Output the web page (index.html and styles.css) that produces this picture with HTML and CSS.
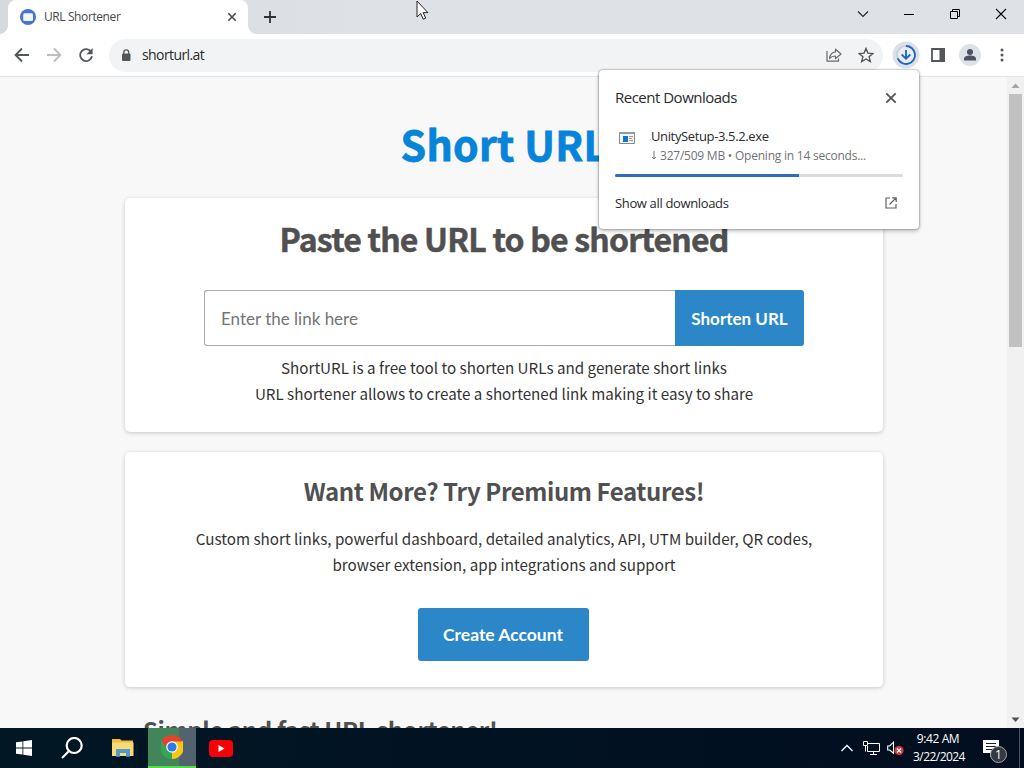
FILE: index.html
```
<!doctype html>
<html lang="en">
    <head>
        <meta charset="UTF-8" />
        <meta name="viewport" content="width=device-width, initial-scale=1.0" />
        <title>URL Shortener</title>
        <link rel="stylesheet" href="styles.css">
    </head>
    <body>
        <div class="browser">
            <!-- Tab strip and window controls -->
            <header class="tab-strip">
                <div class="tab">
                    <svg class="favicon" width="16" height="16" viewBox="0 0 16 16">
                        <circle cx="8" cy="8" r="8" fill="#4b74cb" />
                        <rect x="3.2" y="4.2" width="9.8" height="7.8" rx="1.5" fill="#eef7fb" />
                    </svg>
                    <span class="tab-title">URL Shortener</span>
                    <svg class="tab-close" width="10" height="10" viewBox="0 0 10 10">
                        <path d="M1.3 1.3l7.4 7.4M8.7 1.3L1.3 8.7" stroke="#45484b" stroke-width="1.5" />
                    </svg>
                </div>
                <svg class="new-tab" width="12" height="12" viewBox="0 0 12 12">
                    <path d="M6 0v12M0 6h12" stroke="#2f3236" stroke-width="1.8" />
                </svg>
                <div class="window-controls">
                    <svg width="46" height="28" viewBox="0 0 46 28"><path d="M18 11.5l5 5 5-5" fill="none" stroke="#222" stroke-width="1.1" /></svg>
                    <svg width="46" height="28" viewBox="0 0 46 28"><path d="M18 14.5h10" stroke="#000" /></svg>
                    <svg width="46" height="28" viewBox="0 0 46 28"><path d="M18.5 11.5h7v7h-7zM20.500 11.500v-2h7v7h-2" fill="none" stroke="#000" /></svg>
                    <svg width="46" height="28" viewBox="0 0 46 28"><path d="M18 9l10 10M28 9L18 19" stroke="#000" stroke-width="1.1" /></svg>
                </div>
            </header>

            <!-- Address bar -->
            <div class="toolbar">
                <div class="nav">
                    <svg width="16" height="16" viewBox="0 0 16 16"><path d="M15 8H2M8 1.500L1.600 8 8 14.500" fill="none" stroke="#54575a" stroke-width="1.9" /></svg>
                    <svg width="16" height="16" viewBox="0 0 16 16"><path d="M1 8h13M8 1.500L14.400 8 8 14.500" fill="none" stroke="#bbbdbf" stroke-width="1.9" /></svg>
                    <svg width="16" height="16" viewBox="0 0 16 16"><path d="M13.200 4.900A6 6 0 1 0 14 9.300" fill="none" stroke="#54575a" stroke-width="1.9" /><path d="M14.600 1v6.200H8.400z" fill="#54575a" /></svg>
                </div>
                <div class="omnibox">
                    <svg width="10" height="13" viewBox="0 0 10 13"><rect x="1" y="4.500" width="8.500" height="7.500" rx="1" fill="#54575a" /><path d="M2.800 5V3.400a2.400 2.400 0 0 1 4.900 0V5" fill="none" stroke="#54575a" stroke-width="1.300" /></svg>
                    <span class="address">shorturl.at</span>
                    <svg class="share" width="16" height="16" viewBox="0 0 16 16" fill="none" stroke="#686b6f" stroke-width="1.200"><path d="M1 4v10.200h11.500V11.500" /><path d="M9.500 2.200L15 7l-5.500 4.600V9C7 9 5.200 9.500 3.600 11.500 4 7.500 6.200 5.300 9.500 4.900z" stroke-linejoin="round" /></svg>
                    <svg class="star" width="16" height="16" viewBox="0 0 16 16"><path d="M8 1.500l1.900 4.600 5 .4-3.800 3.300 1.200 4.800L8 12l-4.300 2.600 1.200-4.800L1.100 6.500l5-.4z" fill="none" stroke="#54575a" stroke-width="1.400" /></svg>
                </div>
                <div class="actions">
                    <svg width="28" height="28" viewBox="0 0 28 28">
                        <circle cx="14" cy="14" r="13.500" fill="#dce1e8" />
                        <circle cx="14" cy="14" r="9" fill="#e9edf3" stroke="#c5ced9" stroke-width="1.700" />
                        <path d="M14 5a9 9 0 1 1-8.300 12.400" fill="none" stroke="#1b63c5" stroke-width="1.800" />
                        <path d="M14 9v8.500M9.700 13.500L14 17.800l4.300-4.300" fill="none" stroke="#1b63c5" stroke-width="1.800" />
                    </svg>
                    <svg width="14" height="14" viewBox="0 0 14 14"><path d="M1 1h12v12H1z" fill="none" stroke="#54575a" stroke-width="1.800" /><path d="M8.500 0H14v14H8.500z" fill="#54575a" /></svg>
                    <svg width="22" height="22" viewBox="0 0 22 22"><circle cx="11" cy="11" r="11" fill="#dee1e6" /><circle cx="11" cy="8" r="3" fill="#4c5260" /><path d="M5 16.500v-1.700c0-2 3-3.200 6-3.200s6 1.200 6 3.200v1.700z" fill="#4c5260" /></svg>
                    <svg width="4" height="14" viewBox="0 0 4 14" fill="#54575a"><circle cx="2" cy="2" r="1.500" /><circle cx="2" cy="7" r="1.500" /><circle cx="2" cy="12" r="1.500" /></svg>
                </div>
            </div>

            <!-- Page -->
            <div class="viewport">
                <main class="page">
                    <h1 class="logo">Short URL</h1>
                    <section class="card card-shorten">
                        <h2>Paste the URL to be shortened</h2>
                        <form class="shorten-form">
                            <input class="link-input" type="text" placeholder="Enter the link here">
                            <button class="button" type="button">Shorten URL</button>
                        </form>
                        <p>ShortURL is a free tool to shorten URLs and generate short links<br>URL shortener allows to create a shortened link making it easy to share</p>
                    </section>
                    <section class="card card-premium">
                        <h3>Want More? Try Premium Features!</h3>
                        <p>Custom short links, powerful dashboard, detailed analytics, API, UTM builder, QR codes,<br>browser extension, app integrations and support</p>
                        <button class="button button-account" type="button">Create Account</button>
                    </section>
                    <h3 class="next-heading">Simple and fast URL shortener!</h3>
                </main>
                <div class="scrollbar">
                    <svg width="17" height="17" viewBox="0 0 17 17"><path d="M4.500 11l4-4.500 4 4.500z" fill="#a3a3a3" /></svg>
                    <div class="thumb"></div>
                    <svg class="scroll-down" width="17" height="17" viewBox="0 0 17 17"><path d="M4.500 6.500l4 4.500 4-4.500z" fill="#505050" /></svg>
                </div>
            </div>
        </div>

        <!-- Download bubble -->
        <aside class="downloads">
            <div class="downloads-head">
                <span class="downloads-title">Recent Downloads</span>
                <svg width="12" height="12" viewBox="0 0 12 12"><path d="M1.300 1.300l9.400 9.400M10.700 1.300l-9.400 9.400" stroke="#505357" stroke-width="1.800" /></svg>
            </div>
            <div class="download">
                <svg width="16" height="12" viewBox="0 0 16 12">
                    <path d="M.5.5h15v11H.5z" fill="#f5f5f5" stroke="#85898c" />
                    <path d="M0 0h16v2H0z" fill="#969a9d" />
                    <path d="M4 4h5v6H4z" fill="#0878cf" />
                    <path d="M10 4.500h4M10 6.500h3M10 8.500h4" stroke="#999" />
                </svg>
                <div class="download-text">
                    <div class="file-name">UnitySetup-3.5.2.exe</div>
                    <div class="file-status"><svg width="6" height="9" viewBox="0 0 6 9"><path d="M3 0v8M1 6l2 2 2-2" fill="none" stroke="#777" /></svg><span>327/509 MB • Opening in 14 seconds...</span></div>
                </div>
            </div>
            <div class="progress"><div class="progress-bar"></div></div>
            <div class="downloads-foot">
                <span>Show all downloads</span>
                <svg width="12" height="12" viewBox="0 0 12 12" fill="none" stroke="#606367" stroke-width="1.200"><path d="M5 1H1v10h10V7M7 .8h4.200V5M11 1L4.500 7.500" /></svg>
            </div>
        </aside>

        <!-- Windows taskbar -->
        <footer class="taskbar">
            <div class="task"><svg width="16" height="16" viewBox="0 0 16 16" fill="#fff"><path d="M0 2.300L6.500 1.400v6.200H0zM7.300 1.300L16 0v7.600H7.300zM0 8.400h6.500v6.200L0 13.700zM7.300 8.400H16V16l-8.700-1.300z" /></svg></div>
            <div class="task"><svg width="22" height="22" viewBox="0 0 22 22" fill="none" stroke="#fff" stroke-width="2.200"><circle cx="13.200" cy="8.500" r="7.500" /><path d="M8 14L1 21" /></svg></div>
            <div class="task">
                <svg width="22" height="18" viewBox="0 0 22 18">
                    <path d="M0 0h8l1.500 1.500H21V17H0z" fill="#f0bd42" /><path d="M0 3.500h21.500V17H0z" fill="#f9d978" />
                    <path d="M4 17.800V10h14v7.800h-4V14H8v3.800z" fill="#509bc7" />
                </svg>
            </div>
            <div class="task task-active">
                <svg width="22" height="24" viewBox="1 0 22 24">
                    <path d="M12 12L1.610 6A12 12 0 0 1 22.390 6z" fill="#e8412f" />
                    <path d="M12 12L12 24A12 12 0 0 1 1.610 6z" fill="#35a553" />
                    <path d="M12 12L22.390 6A12 12 0 0 1 12 24z" fill="#fbc618" />
                    <path d="M12 6.500h10.600L24 12H12z" fill="#fbc618" /><path d="M1.600 6l5.700 8.500L12 12V6.500z" fill="#e8412f" /><path d="M1.600 6L7 15l5 2.500-3 6.100A12 12 0 0 1 1.600 6z" fill="#35a553" />
                    <circle cx="12" cy="12" r="5.800" fill="#fff" /><circle cx="12" cy="12" r="4.600" fill="#287de8" />
                </svg>
            </div>
            <div class="task task-youtube"><svg width="24" height="17" viewBox="0 0 24 17"><rect width="24" height="17" rx="4" fill="#f80008" /><path d="M9.500 5l6 3.500-6 3.500z" fill="#fff" /></svg></div>
            <div class="tray">
                <svg class="tray-up" width="12" height="8" viewBox="0 0 12 8"><path d="M.5 7L6 1.500 11.500 7" fill="none" stroke="#fff" stroke-width="1.300" /></svg>
                <svg class="tray-net" width="17" height="14" viewBox="0 0 17 14" fill="none" stroke="#fff"><path d="M4 2.500h12.500v8H4.500V5M10.500 10.500v2.500M7 13.500h7M.5.500h4v4h-4zM2.500 4.500v6" /></svg>
                <svg class="tray-sound" width="18" height="15" viewBox="0 0 18 15">
                    <path d="M.7 5h2L6.500 1.200v11L2.700 9h-2z" fill="none" stroke="#fff" stroke-width="1.100" />
                    <circle cx="12" cy="9.500" r="4.600" fill="#d83b3b" /><path d="M10 7.500l4 4M14 7.500l-4 4" stroke="#fff" stroke-width="1.200" />
                </svg>
                <div class="clock"><div class="time">9:42 AM</div><div class="date">3/22/2024</div></div>
                <div class="notifications">
                    <svg width="16" height="17" viewBox="0 0 16 17"><path d="M0 0h16v13h-5l-4 4v-4H0z" fill="#fff" /><path d="M3 3.500h10M3 6.500h10M3 9.500h7" stroke="#18202c" stroke-width="1.200" /></svg>
                    <span class="badge">1</span>
                </div>
                <div class="show-desktop"></div>
            </div>
        </footer>

        <svg class="cursor" width="13" height="20" viewBox="0 0 13 20"><path d="M1 1v16l3.700-3.500 2.500 5.700 2.500-1-2.500-5.600h4.700z" fill="#fff" stroke="#222" /></svg>
    </body>
</html>
```
FILE: styles.css
```
:root {
    --blue: #2b87c8;
    --logo: #0584da;
    --gray-700: #505050;
    --page: #f8f8f8;
    --frame: #dee1e6;
    --ui-font: "Open Sans", "Noto Sans", sans-serif;
    --page-font: "Noto Sans CJK SC", "Noto Sans", sans-serif;
}

* {
    box-sizing: border-box;
}

body {
    width: 1024px;
    height: 768px;
    margin: 0;
    overflow: hidden;
    font-family: var(--ui-font);
    background: var(--page);
    color: #292b2e;
}

svg {
    display: block;
    flex: none;
}

.browser {
    height: 728px;
    display: flex;
    flex-direction: column;
}

/* Tab strip */
.tab-strip {
    height: 34px;
    flex: none;
    display: flex;
    background: linear-gradient(90deg, #d7dadd, var(--frame) 35%);
}
.tab {
    position: relative;
    width: 240px;
    margin-left: 8px;
    padding: 0 11px 0 12px;
    display: flex;
    align-items: center;
    background: #fff;
    border-radius: 8px 8px 0 0;
}
/* Flared feet of the active tab */
.tab::before,
.tab::after {
    content: "";
    position: absolute;
    bottom: 0;
    width: 8px;
    height: 8px;
}
.tab::before {
    left: -8px;
    background: radial-gradient(circle at 0 0, transparent 7.5px, #fff 8px);
}
.tab::after {
    right: -8px;
    background: radial-gradient(circle at 100% 0, transparent 7.5px, #fff 8px);
}
.tab-title {
    flex: 1;
    margin-left: 8px;
    font-size: 12px;
    line-height: 16px;
    padding-bottom: 1px;
    letter-spacing: -0.4px;
    color: #45474a;
}
.new-tab {
    margin: 11px 0 0 16px;
}
.window-controls {
    display: flex;
    margin-left: auto;
}

/* Toolbar */
.toolbar {
    height: 43px;
    flex: none;
    display: flex;
    align-items: center;
    background: #fff;
    border-bottom: 1px solid #dfe1e3;
}
.nav {
    display: flex;
    gap: 16px;
    margin: 0 15px 0 14px;
}
.omnibox {
    width: 774px;
    height: 33px;
    padding: 0 9px 0 12px;
    display: flex;
    align-items: center;
    background: #f1f3f4;
    border-radius: 17px;
}
.address {
    flex: 1;
    margin-left: 11px;
    padding-bottom: 1px;
    font-size: 14px;
    letter-spacing: -0.6px;
}
.share {
    margin-right: 16px;
}
.actions {
    flex: 1;
    display: flex;
    align-items: center;
    gap: 11px;
    padding-left: 9px;
}
.actions svg:nth-child(3) {
    margin-left: 3px;
}
.actions svg:nth-child(4) {
    margin-left: 8px;
}

/* Page */
.viewport {
    flex: 1;
    display: flex;
    min-height: 0;
}
.page {
    flex: 1;
    overflow: hidden;
    padding: 0 124px 0 125px;
    font-family: var(--page-font);
    text-align: center;
}
h1,
h2,
h3,
p {
    margin: 0;
    white-space: nowrap;
}
.logo {
    height: 121px;
    padding-top: 36px;
    font-size: 41px;
    line-height: 60px;
    letter-spacing: 0.3px;
    color: var(--logo);
    -webkit-text-stroke: 0.8px var(--logo);
}
.card {
    background: #fff;
    border-radius: 5px;
    box-shadow: 0 1px 4px rgba(0, 0, 0, 0.2);
    margin-bottom: 20px;
}
.card h2 {
    height: 64px;
    padding-top: 18px;
    font-size: 32px;
    line-height: 44px;
    letter-spacing: -0.8px;
    color: var(--gray-700);
    -webkit-text-stroke: 0.5px var(--gray-700);
}
.card h3,
.next-heading {
    font-size: 24px;
    line-height: 36px;
    letter-spacing: -0.4px;
    color: var(--gray-700);
}
.card p {
    font-size: 15.2px;
    line-height: 26px;
    color: #333;
}
.card-shorten {
    height: 234px;
}
.card-premium {
    height: 235px;
    padding-top: 21px;
}
.card-premium p {
    margin: 16px 0 31px;
}
.shorten-form {
    width: 600px;
    height: 56px;
    margin: 28px auto 8px 79px;
    display: flex;
}
.link-input {
    flex: 1;
    min-width: 0;
    border: 1px solid #aaa;
    border-right: 0;
    border-radius: 3px 0 0 3px;
    padding: 0 16px;
    font: 17px Lato, sans-serif;
}
.link-input::placeholder {
    color: #757575;
}
.button {
    width: 129px;
    padding: 0;
    border: 0;
    border-radius: 0 3px 3px 0;
    background: var(--blue);
    color: #fff;
    font: bold 17px Lato, sans-serif;
}
.button-account {
    width: 171px;
    height: 53px;
    margin-right: 2px;
    border-radius: 3px;
    font-size: 17.5px;
}
.next-heading {
    padding-left: 18px;
    margin-top: 25px;
    text-align: left;
}
.scrollbar {
    width: 17px;
    display: flex;
    flex-direction: column;
    background: #f1f1f1;
}
.thumb {
    width: 13px;
    height: 253px;
    margin-left: 2px;
    background: #c1c1c1;
}
.scroll-down {
    margin-top: auto;
}

/* Download bubble */
.downloads {
    position: absolute;
    left: 599px;
    top: 70px;
    width: 320px;
    height: 159px;
    padding: 16px;
    background: #fff;
    border-radius: 4px;
    box-shadow: 0 0 2px rgba(0, 0, 0, 0.55), 0 2px 4px rgba(0, 0, 0, 0.25);
}
.downloads-head,
.downloads-foot {
    display: flex;
    align-items: center;
    justify-content: space-between;
    padding-right: 6px;
}
.downloads-head {
    height: 24px;
}
.downloads-title {
    padding-bottom: 2px;
    font-size: 15px;
    letter-spacing: -0.5px;
}
.download {
    display: flex;
    margin-top: 17px;
    padding-left: 4px;
    gap: 16px;
}
.download > svg {
    margin-top: 5px;
}
.file-name {
    font-size: 13px;
    line-height: 19px;
    letter-spacing: -0.37px;
}
.file-status {
    display: flex;
    align-items: center;
    gap: 3px;
    font-size: 12px;
    line-height: 19px;
    letter-spacing: -0.23px;
    color: #717376;
}
.progress {
    height: 3px;
    margin-top: 9px;
    border-radius: 2px;
    background: #dadce0;
}
.progress-bar {
    width: 184px;
    height: 3px;
    border-radius: 2px 0 0 2px;
    background: #2e6dbd;
}
.downloads-foot {
    margin-top: 16px;
    font-size: 13px;
    line-height: 20px;
    letter-spacing: -0.35px;
}

/* Taskbar */
.taskbar {
    height: 40px;
    display: flex;
    background: linear-gradient(90deg, #011724, #020e20);
    color: #fff;
}
.task {
    width: 48px;
    display: flex;
    align-items: center;
    justify-content: center;
}
.task:nth-child(3) {
    width: 52px;
    padding-left: 1px;
}
.task-active {
    background: linear-gradient(90deg, #43855b 65%, #50636f 65%);
    border-bottom: 2px solid #55db49;
}
.task-youtube {
    width: 50px;
}
.tray {
    margin-left: auto;
    display: flex;
    align-items: center;
}
.tray-net {
    margin-left: 10px;
}
.tray-sound {
    margin-left: 7px;
}
.clock {
    width: 68px;
    font-size: 12px;
    line-height: 18px;
    letter-spacing: -0.55px;
    text-align: center;
    white-space: nowrap;
}
.time {
    padding-right: 2px;
    letter-spacing: -0.4px;
}
.notifications {
    position: relative;
    margin-left: 10px;
}
.badge {
    position: absolute;
    left: 7px;
    top: 6px;
    width: 17px;
    height: 17px;
    border: 1px solid #a0a5aa;
    border-radius: 50%;
    background: #343a42;
    font-size: 12px;
    line-height: 15px;
    text-align: center;
}
.show-desktop {
    width: 5px;
    height: 40px;
    margin-left: 20px;
    border-left: 1px solid #48515f;
}

.cursor {
    position: absolute;
    left: 416px;
    top: 0;
}
```
